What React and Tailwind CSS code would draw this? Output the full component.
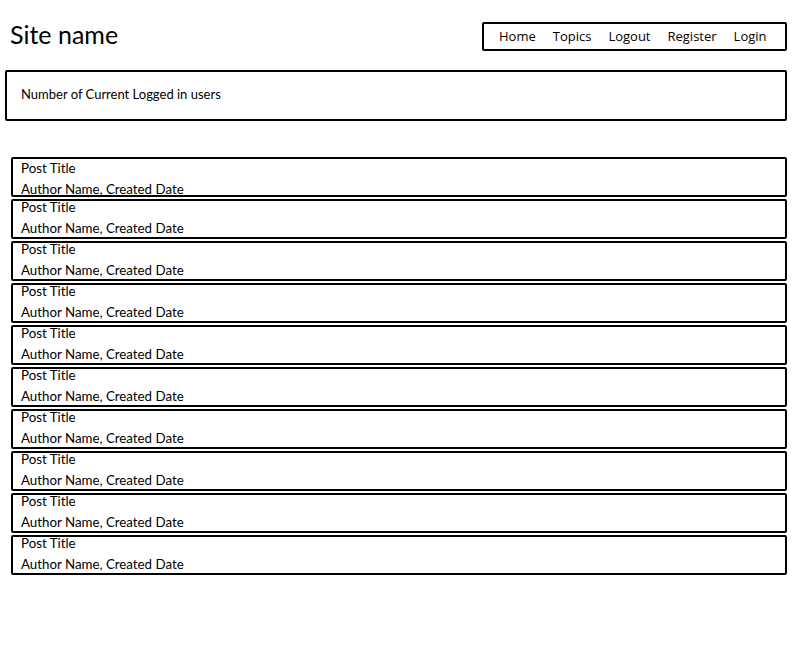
import React from 'react';

const posts = Array.from({ length: 10 }, (_, i) => ({ id: i, title: 'Post Title', meta: 'Author Name, Created Date' }));
const links = ['Home', 'Topics', 'Logout', 'Register', 'Login'];

export default function App() {
  return (
    <div className="w-[797px] h-[652px] bg-white text-black font-['Lato','Liberation_Sans',sans-serif]">
      <div className="flex items-start justify-between pl-[10px] pr-[10px] pt-[20px]">
        <h1 className="text-[25px] leading-[28px] font-normal">Site name</h1>
        <nav className="h-[29px] w-[305px] mt-[2px] border-2 border-black rounded-[2px] flex items-center pl-[15px] gap-[17px] text-[13px] font-['Open_Sans','Liberation_Sans',sans-serif]">
          {links.map(l => <span key={l}>{l}</span>)}
        </nav>
      </div>

      <div className="mt-[19px] ml-[5px] mr-[10px] h-[51px] border-2 border-black rounded-[2px] flex items-center pl-[14px] pb-[2px] text-[13px]">
        Number of Current Logged in users
      </div>

      <div className="mt-[36px] ml-[11px] mr-[10px] flex flex-col gap-[2px]">
        {posts.map((p, i) => (
          <div key={p.id} className="h-[40px] border-2 border-black rounded-[2px] pl-[8px] text-[13.3px] flex flex-col">
            <p className={i === 0 ? 'leading-[16px] mt-[1px]' : 'leading-[16px] mt-[-2px]'}>{p.title}</p>
            <p className="leading-[16px] mt-[5px]">{p.meta}</p>
          </div>
        ))}
      </div>
    </div>
  );
}
